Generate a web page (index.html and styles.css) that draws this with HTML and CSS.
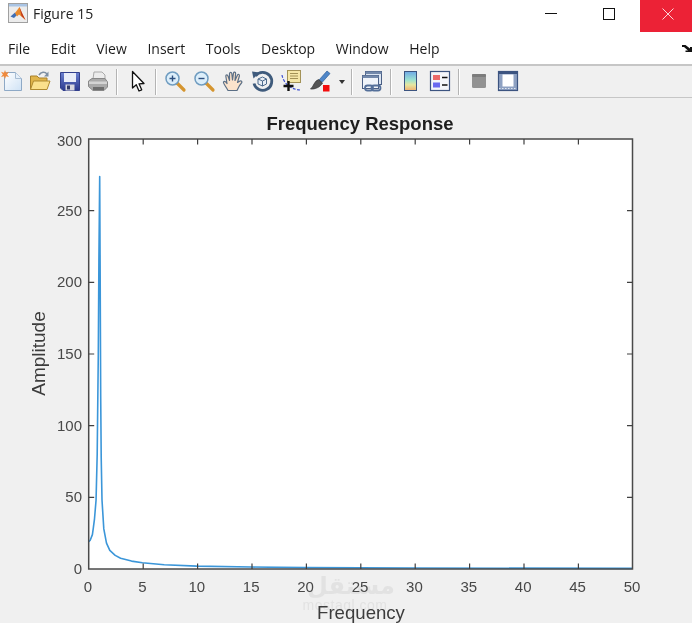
FILE: index.html
```html
<!DOCTYPE html>
<html lang="en">
<head>
<meta charset="utf-8">
<title>Figure 15</title>
<link rel="stylesheet" href="styles.css">
</head>
<body>
<div class="window">
  <header class="titlebar">
    <svg class="app-icon" width="20" height="20" viewBox="0 0 20 20">
      <rect x="0.5" y="0.5" width="19" height="19" fill="#ececec" stroke="#a0a0a0"/>
      <rect x="1" y="1" width="18" height="2.5" fill="#a9c4e4"/>
      <path d="M2.5 13.5 L7 9.5 L9.5 11.500 L6 15 Z" fill="#3f6fb5"/>
      <path d="M7 10 L11.500 4 L14 10 L17.500 17 L14 14 L11 11.500 L9 13.500 Z" fill="#ea8a2c"/>
      <path d="M11.500 4 L14 10 L17.500 17 L13.500 13 Z" fill="#c2381d"/>
    </svg>
    <span class="title-text">Figure 15</span>
    <div class="controls">
      <div class="ctl"><span class="ctl-min"></span></div>
      <div class="ctl"><span class="ctl-max"></span></div>
      <div class="ctl ctl-close">
        <svg class="close-icon" width="12" height="12" viewBox="0 0 12 12"><path class="close-x" d="M0.500 0.500 L11.500 11.500 M11.500 0.500 L0.500 11.500"/></svg>
      </div>
    </div>
  </header>

  <nav class="menubar">
    <span>File</span><span>Edit</span><span>View</span><span>Insert</span><span>Tools</span><span>Desktop</span><span>Window</span><span>Help</span>
    <svg class="dock" width="10" height="7" viewBox="0 0 10 7"><path d="M0 0 L3.500 0 L8 3.500 L8 2 L10 2 L10 7 L3.500 7 L3.500 5.500 L6 5.500 L2 2 L0 2 Z" fill="#111"/></svg>
  </nav>

  <div class="toolbar">
    <div class="group">
      <svg class="tool" viewBox="0 0 24 24">
        <defs><linearGradient id="pg" x1="0" y1="0" x2="1" y2="1"><stop offset="0" stop-color="#ffffff"/><stop offset="1" stop-color="#cfe2f5"/></linearGradient></defs>
        <path d="M4.500 2.500 H15.500 L21.500 8.500 V20.500 H4.500 Z" fill="url(#pg)" stroke="#8ea9c6"/>
        <path d="M15.500 2.500 V8.500 H21.500" fill="#e6f0fa" stroke="#a7bdd3"/>
        <path d="M5 0 L6 2.700 L9 1.700 L7.100 4.500 L9 7 L6 6.300 L5 9 L4 6.300 L1 7 L2.900 4.500 L1 1.700 L4 2.700 Z" fill="#f08a3c"/>
      </svg>
      <svg class="tool" viewBox="0 0 24 24">
        <path d="M1.500 19.500 V6 H8 L10 8 H18 V11" fill="#e0b44a" stroke="#a9812a"/>
        <path d="M1.500 19.500 L4.500 11 H21 L18 19.500 Z" fill="#fbe08c" stroke="#b08a30"/>
        <path d="M10 5 C12 1.500 16 1.500 18 4" fill="none" stroke="#7d8fa3" stroke-width="1.600"/>
        <path d="M19.500 1.500 V6.500 H15 Z" fill="#7d8fa3"/>
      </svg>
      <svg class="tool" viewBox="0 0 24 24">
        <defs><linearGradient id="fl" x1="0" y1="0" x2="0" y2="1"><stop offset="0" stop-color="#6a7fd0"/><stop offset="1" stop-color="#2c3a8e"/></linearGradient></defs>
        <path d="M2.500 2.500 H21.500 V20.500 H5 L2.500 18 Z" fill="url(#fl)" stroke="#323f8c"/>
        <rect x="6" y="3" width="12" height="9" fill="#e8ecf8"/>
        <rect x="7.500" y="14.500" width="9" height="6" fill="#d8d8e0"/>
        <rect x="9" y="15.500" width="3" height="4" fill="#333a6a"/>
      </svg>
      <svg class="tool" viewBox="0 0 24 24">
        <path d="M6 9 L7 2 L15 2 L18 5 V10 Z" fill="#ececec" stroke="#aaa"/>
        <path d="M1.500 11 L5 8.500 H18 L20.500 12 V17 L17 20.500 H6 L1.500 16.500 Z" fill="#aaa" stroke="#888"/>
        <path d="M2 11.500 H20 V14 H2 Z" fill="#d4d4d4"/>
        <path d="M6 17 H17 V20 H6 Z" fill="#6e6e6e"/>
      </svg>
    </div>
    <span class="sep sep-a"></span>
    <div class="group">
      <svg class="tool" viewBox="0 0 24 24"><path d="M6.500 1.500 V18 L10.300 14.700 L13 21 L15.700 19.800 L13 13.800 L18 13.500 Z" fill="#fff" stroke="#111" stroke-width="1.300" stroke-linejoin="round"/></svg>
    </div>
    <span class="sep sep-b"></span>
    <div class="group">
      <svg class="tool" viewBox="0 0 24 24">
        <path d="M14 13 L21 20" stroke="#d5952f" stroke-width="3.200" stroke-linecap="round"/>
        <circle cx="9.500" cy="8.500" r="6.500" fill="#dceefa" stroke="#6f9cc0" stroke-width="1.500"/>
        <path d="M6.500 8.500 H12.500 M9.500 5.500 V11.500" stroke="#2c4f80" stroke-width="1.400"/>
      </svg>
      <svg class="tool" viewBox="0 0 24 24">
        <path d="M14 13 L21 20" stroke="#d5952f" stroke-width="3.200" stroke-linecap="round"/>
        <circle cx="9.500" cy="8.500" r="6.500" fill="#dceefa" stroke="#6f9cc0" stroke-width="1.500"/>
        <path d="M6.500 8.500 H12.500" stroke="#2c4f80" stroke-width="1.400"/>
      </svg>
      <svg class="tool" viewBox="0 0 24 24">
        <path d="M7 20.500 C5 16.500 2 13.500 2.500 12 C3.500 10.500 5.500 12.500 6 13.500 L4.800 6 C4.800 4.500 6.600 4.500 7 6 L8.500 10.500 L8.500 3.500 C8.800 2 10.500 2 10.800 3.500 L11.500 10 L12.500 3 C13 1.500 14.800 2 14.600 3.500 L14 10.500 L16.500 5 C17.200 3.700 18.800 4.500 18.400 6 L16.500 12.500 L19 11 C20.500 10.500 21.500 12 20.500 13 C18 15.500 17 18.500 16 20.500 Z" fill="#fbe3cc" stroke="#5b6f86" stroke-width="1.200" stroke-linejoin="round"/>
      </svg>
      <svg class="tool" viewBox="0 0 24 24">
        <path d="M5.500 6 A9 9 0 1 1 4 13.500" fill="none" stroke="#3f5b7c" stroke-width="2.800"/>
        <path d="M2 1.500 L9.500 2.500 L3.500 8.500 Z" fill="#3f5b7c"/>
        <path d="M8 9 L12.500 7 L16.500 9 V14 L12.500 16 L8 14 Z" fill="#e8eef5" stroke="#4d6a8c"/>
        <path d="M8 9 L12.500 11 L16.500 9 M12.500 11 V16" fill="none" stroke="#4d6a8c"/>
      </svg>
      <svg class="tool" viewBox="0 0 24 24">
        <path d="M3 5 C4 11 9 19 21 20" fill="none" stroke="#3d4fd0" stroke-width="1.200" stroke-dasharray="3 1.500"/>
        <rect x="8.500" y="0.500" width="13" height="12" fill="#f5e7a8" stroke="#a39257"/>
        <path d="M11 3.500 H19 M11 6 H19 M11 8.500 H19" stroke="#a39257"/>
        <path d="M9.500 11 V21 M4.500 16 H14.500" stroke="#111" stroke-width="2.400"/>
      </svg>
      <svg class="tool" viewBox="0 0 24 24">
        <path d="M11 10 L19 1 L22 3.500 L14 12.500 Z" fill="#4f86c8" stroke="#2e5f99" stroke-width="0.700"/>
        <path d="M10.500 9.500 L14.500 13 C12.500 17 7 19.500 2.500 19 C5.500 17 6 11 10.500 9.500 Z" fill="#555" stroke="#333" stroke-width="0.700"/>
        <rect x="15" y="15" width="6.500" height="6.500" fill="#f20d0d"/>
      </svg>
    </div>
    <span class="caret"></span>
    <span class="sep sep-c"></span>
    <div class="group">
      <svg class="tool" viewBox="0 0 24 24">
        <rect x="5.500" y="1.500" width="16" height="13" fill="#dbe5f2" stroke="#4a5f85"/>
        <rect x="5.500" y="1.500" width="16" height="2.500" fill="#7389ab"/>
        <rect x="2.500" y="5.500" width="16" height="13" fill="#f0f4fa" stroke="#4a5f85"/>
        <rect x="2.500" y="5.500" width="16" height="2.500" fill="#7389ab"/>
        <rect x="5" y="15.500" width="8" height="5" rx="2.500" fill="none" stroke="#55709a" stroke-width="1.800"/>
        <rect x="11.500" y="15.500" width="9" height="5" rx="2.500" fill="none" stroke="#55709a" stroke-width="1.800"/>
      </svg>
    </div>
    <span class="sep sep-c"></span>
    <div class="group">
      <svg class="tool" viewBox="0 0 24 24">
        <defs><linearGradient id="cb" x1="0" y1="0" x2="0" y2="1"><stop offset="0" stop-color="#6ea8e6"/><stop offset="0.450" stop-color="#9ce2d0"/><stop offset="0.700" stop-color="#e6e6a0"/><stop offset="1" stop-color="#f0b070"/></linearGradient></defs>
        <rect x="5.500" y="1.500" width="12" height="19" fill="url(#cb)" stroke="#3c5480"/>
      </svg>
      <svg class="tool" viewBox="0 0 24 24">
        <rect x="2.500" y="1.500" width="19" height="19" fill="#f4f6fa" stroke="#3c5480" stroke-width="1.200"/>
        <rect x="5" y="5" width="7" height="5" fill="#ec6a6a"/>
        <rect x="5" y="12.500" width="7" height="5" fill="#6a6af0"/>
        <path d="M14 7.500 H19.500 M14 15 H19.500" stroke="#111" stroke-width="1.300"/>
      </svg>
    </div>
    <span class="sep sep-c"></span>
    <div class="group">
      <svg class="tool" viewBox="0 0 24 24">
        <rect x="5" y="4" width="14" height="14" rx="1.500" fill="#929292"/>
        <rect x="5" y="4" width="14" height="3" rx="1" fill="#7c7c7c"/>
      </svg>
      <svg class="tool" viewBox="0 0 24 24">
        <rect x="2.500" y="1.500" width="19" height="19" fill="#8ea1c2" stroke="#3c5480" stroke-width="1.200"/>
        <rect x="3" y="2" width="18" height="2" fill="#3c5480"/>
        <rect x="6.500" y="4.500" width="11" height="12" fill="#fff"/>
        <path d="M3 18.500 H21" stroke="#e0e6f0" stroke-dasharray="1.500 1.500"/>
      </svg>
    </div>
  </div>

  <main class="figure">
    <svg class="plot" width="692" height="525" viewBox="0 98 692 525">
      <g class="watermark">
        <text class="wm-ar" x="351" y="594" text-anchor="middle">مستقل</text>
        <text class="wm-en" x="345" y="610" text-anchor="middle">mostaql.com</text>
      </g>
      <rect class="axes-bg" x="88.700" y="139" width="543.800" height="430"/>
      <polyline class="curve" points="88.700,541.800 90.200,540.300 92.400,534.600 93.400,527.400 94.500,518.800 96.050,500.200 97.200,454.300 98.300,354 98.900,260.800 99.700,176.500 100.200,282 100.700,397 101.200,457 102,500 103.800,528.900 106.500,543.200 109.800,550.400 115.200,555.400 120.600,558.200 131.500,561.100 142.400,562.700 164.200,564.700 196.800,566.100 251.200,567 305.600,567.600 414.400,568 632,568.400"/>
      <rect class="axes-box" x="88.700" y="139" width="543.800" height="430"/>
      <path class="ticks" d="M143.200 569v-5.500M197.600 569v-5.500M252 569v-5.500M306.400 569v-5.500M360.800 569v-5.500M415.200 569v-5.500M469.600 569v-5.500M524 569v-5.500M578.400 569v-5.500
        M143.200 139v5.500M197.600 139v5.500M252 139v5.500M306.400 139v5.500M360.800 139v5.500M415.200 139v5.500M469.600 139v5.500M524 139v5.500M578.400 139v5.500
        M88.700 497.300h5.500M88.700 425.700h5.500M88.700 354h5.500M88.700 282.300h5.500M88.700 210.700h5.500
        M632.500 497.300h-5.500M632.500 425.700h-5.500M632.500 354h-5.500M632.500 282.300h-5.500M632.500 210.700h-5.500"/>
      <g class="tick-x">
        <text x="88" y="592">0</text><text x="142.400" y="592">5</text><text x="196.800" y="592">10</text><text x="251.200" y="592">15</text><text x="305.600" y="592">20</text><text x="360" y="592">25</text><text x="414.400" y="592">30</text><text x="468.800" y="592">35</text><text x="523.200" y="592">40</text><text x="577.600" y="592">45</text><text x="632" y="592">50</text>
      </g>
      <g class="tick-y">
        <text x="82" y="574">0</text><text x="82" y="502.300">50</text><text x="82" y="430.700">100</text><text x="82" y="359">150</text><text x="82" y="287.300">200</text><text x="82" y="215.700">250</text><text x="82" y="146">300</text>
      </g>
      <text class="plot-title" x="360" y="130">Frequency Response</text>
      <text class="x-label" x="361" y="619">Frequency</text>
      <text class="y-label" transform="translate(45 353.500) rotate(-90)">Amplitude</text>
    </svg>
  </main>
</div>
</body>
</html>
```

FILE: styles.css
```css
* { box-sizing: border-box; }

html, body {
  margin: 0;
  padding: 0;
  background: #f0f0f0;
}

.window {
  width: 692px;
  height: 623px;
  overflow: hidden;
  display: flex;
  flex-direction: column;
  font-family: "Open Sans", "Noto Sans", sans-serif;
  color: #111;
  filter: blur(0.35px);
}

.titlebar {
  height: 32px;
  flex: none;
  display: flex;
  align-items: flex-start;
  background: #fff;
  padding-left: 8px;
}

.app-icon {
  margin-top: 3px;
  flex: none;
}

.title-text {
  margin-left: 5px;
  margin-top: 4px;
  font-size: 14px;
  line-height: 20px;
  color: #222;
}

.controls {
  margin-left: auto;
  display: flex;
  height: 32px;
}

.ctl {
  width: 58px;
  height: 32px;
  display: flex;
  align-items: center;
  justify-content: center;
}

.ctl-min {
  display: block;
  width: 12px;
  height: 1px;
  background: #111;
  margin-top: -6px;
}

.ctl-max {
  display: block;
  width: 12px;
  height: 12px;
  border: 1px solid #111;
  margin-top: -4px;
}

.ctl-close {
  width: 52px;
  margin-left: 2px;
  background: #ec2236;
}

.close-icon {
  margin: -4px 0 0 3px;
}

.close-x {
  stroke: #fbd5d9;
  stroke-width: 1;
  fill: none;
}

.menubar {
  height: 32px;
  flex: none;
  display: flex;
  align-items: center;
  gap: 20.6px;
  padding-left: 8px;
  background: #fff;
  font-size: 14px;
  color: #1c1c1c;
  position: relative;
}

.dock {
  position: absolute;
  right: 0;
  top: 13px;
}

.toolbar {
  height: 34px;
  flex: none;
  display: flex;
  align-items: center;
  background: #f0f0f0;
  border-top: 2px solid #c6c6c6;
  border-bottom: 1px solid #c6c6c6;
}

.group {
  display: flex;
  gap: 5px;
}

.tool {
  width: 24px;
  height: 24px;
  flex: none;
}

.sep {
  width: 2px;
  height: 26px;
  flex: none;
  background: #b4b4b4;
  border-right: 1px solid #fff;
}

.sep-a { margin: 0 8px 0 5px; }
.sep-b { margin: 0 6px 0 5px; }
.sep-c { margin: 0 7px 0 6px; }

.caret {
  width: 0;
  height: 0;
  flex: none;
  margin-left: 7px;
  border-left: 3.5px solid transparent;
  border-right: 3.5px solid transparent;
  border-top: 4px solid #333;
}

.figure {
  flex: 1;
  min-height: 0;
  background: #f0f0f0;
}

.plot {
  display: block;
  font-family: "Liberation Sans", Arial, sans-serif;
}

.axes-bg { fill: #fff; }

.axes-box {
  fill: none;
  stroke: #4a4a4a;
  stroke-width: 1.5;
}

.ticks {
  fill: none;
  stroke: #404040;
  stroke-width: 1.2;
}

.curve {
  fill: none;
  stroke: #3b96d9;
  stroke-width: 1.6;
  stroke-linejoin: round;
}

.tick-x text {
  font-size: 15px;
  fill: #484848;
  text-anchor: middle;
}

.tick-y text {
  font-size: 15px;
  fill: #484848;
  text-anchor: end;
}

.plot-title {
  font-size: 18.5px;
  font-weight: 700;
  fill: #1d1d1d;
  text-anchor: middle;
}

.x-label,
.y-label {
  fill: #3c3c3c;
  text-anchor: middle;
}

.x-label { font-size: 18.6px; }
.y-label { font-size: 19px; }

.wm-ar {
  font-family: "DejaVu Sans", sans-serif;
  font-size: 24px;
  font-weight: 700;
  fill: #e2e2e2;
}

.wm-en {
  font-family: "Liberation Sans", sans-serif;
  font-size: 14px;
  letter-spacing: 0.5px;
  fill: #e2e2e2;
}
```
